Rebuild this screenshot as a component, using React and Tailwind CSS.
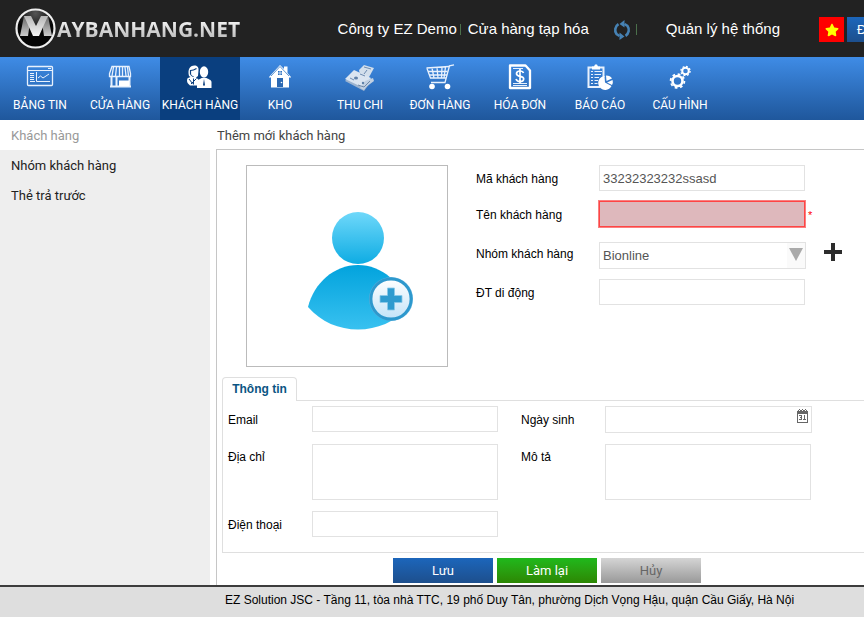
import { FaStar } from "react-icons/fa";

const svg = { fill: "none", stroke: "#e8f1fd", strokeWidth: 1.3 };

function DashboardIcon() {
  return (
    <svg width="28" height="24" viewBox="0 0 28 24" {...svg}>
      <rect x="1.5" y="1.5" width="25" height="19" rx="1" />
      <path d="M2 5.5h24M22 3.5h3M4 8.5h4M4 10.5h4M4 12.5h4M4 14.5h4M4 16.500h5M10.500 7v9.500H24M12 13l2.500-2 2.500 2 6-4" strokeWidth="1" />
    </svg>
  );
}

function StoreIcon() {
  return (
    <svg width="28" height="24" viewBox="0 0 28 24" {...svg}>
      <path d="M6 1.500h17l1.500 7v3h-21v-3z" />
      <path d="M7.500 2L6 11M10.500 2l-1 9M13.500 2v9M16.500 2v9M19 2l1 9M21.500 2l1 9" />
      <path d="M5.500 11v10.500M10.500 12v9M23.500 11v10.500M4 21.500h21" strokeWidth="2" />
      <path d="M13 15.500h10V21H13z" fill="#fff" stroke="none" />
    </svg>
  );
}

function CustomersIcon() {
  return (
    <svg width="28" height="24" viewBox="0 0 28 24" fill="#fff">
      <path d="M3 11C1.500 5 3.500 .5 8.500 .5c2.500 0 4.500 1.500 4 5L12 11l-2 1.500 2.500 2-1.500 6H4l-2-2c-1.500-2-1-5 0-5.500l2.500-1z" />
      <path d="M4.500 9V5.500C7 5.500 9 4.500 10.500 3.500" fill="none" stroke="#0a3f7f" strokeWidth="1.200" />
      <path d="M4.500 9c.5 1.500 1.500 2.500 3 2.500M3 14l3.500 4.500M10.500 13.500L5 19M7.500 13.500v6" fill="none" stroke="#0a3f7f" strokeWidth="1" />
      <ellipse cx="18" cy="7" rx="4.200" ry="5.700" />
      <path d="M11 23v-6c0-2 3-3 4.500-4h5c2 1 5 2 5 4v6z" />
      <path d="M18 14l-1 6 1 1 1-1z" fill="#0a3f7f" />
    </svg>
  );
}

function HouseIcon() {
  return (
    <svg width="28" height="24" viewBox="0 0 28 24">
      <path d="M3 12L14 0l4 4V1.500h3.500V8L25 12l-1 1-1-1v10.500H5V12l-1 1z" fill="#fff" />
      <path d="M5 11l9-9.500 9 9.500" fill="none" stroke="#3478c7" strokeWidth=".8" />
      <rect x="12" y="6" width="4" height="4" fill="#2f72c1" />
      <path d="M12 8h4M14 6v4" stroke="#fff" strokeWidth=".7" />
      <rect x="11" y="13" width="6" height="9" fill="#2b69b3" />
      <circle cx="15.500" cy="17.500" r=".8" fill="#fff" />
    </svg>
  );
}

function MoneyIcon() {
  return (
    <svg width="30" height="27" viewBox="0 0 30 27">
      <path d="M14 6l5-5 10 3-6 11-7 1z" fill="#d3dfec" />
      <path d="M0 17l7-7 18 9-6 8z" fill="#9cb3cf" />
      <path d="M0 15l9-9 17 8-7 10z" fill="#dbe5f1" />
      <path d="M20 17l8-3 1 3-8 6-2 3-4-2z" fill="#c1d0e2" />
      <path d="M19 3l7 2M5 14l4 2M15 10l5 2M22 6l-3 4" stroke="#6d8bb0" strokeWidth="1" fill="none" />
      <ellipse cx="11" cy="14" rx="2" ry="1.500" fill="#5f80a8" />
      <circle cx="18" cy="19" r="1.200" fill="#5f80a8" />
      <path d="M13 21l6 2 6-6" stroke="#7089a8" fill="none" />
    </svg>
  );
}

function CartIcon() {
  return (
    <svg width="30" height="26" viewBox="0 0 30 26" {...svg}>
      <path d="M29 .8l-4.500 1L20 18.500H6M2 4.500L5.500 14h16" />
      <path d="M1.500 4L24 2.500M3 7.500h19.500M4 11h18M7 4l2 10M12 3.500l1 10.500M17 3l-.5 11M20.500 3L19 14" />
      <circle cx="7" cy="22.500" r="2.800" fill="#fff" stroke="none" />
      <circle cx="22.500" cy="22.500" r="2.800" fill="#fff" stroke="none" />
    </svg>
  );
}

function InvoiceIcon() {
  return (
    <svg width="28" height="26" viewBox="0 0 28 26" {...svg}>
      <path d="M4 1.500h15.500l4.500 5v17.500H4z" strokeWidth="2.300" stroke="#fff" strokeLinejoin="round" />
      <path d="M7 4.500h10M7 19.500h14M7 21.500h14" strokeWidth="1" />
      <path d="M17.500 9c-.5-1.500-2-2-3.500-2-2 0-3.500 1-3.500 2.700 0 3.500 7.200 1.800 7.200 5 0 1.800-1.500 2.800-3.700 2.800s-3.500-1-4-2.500M14 5v14" strokeWidth="1.700" stroke="#fff" />
    </svg>
  );
}

function ReportIcon() {
  return (
    <svg width="28" height="26" viewBox="0 0 28 26" {...svg}>
      <path d="M14 23H2.500V3.500h15V13" strokeWidth="2" />
      <path d="M6 2.500h2l1-2h2l1 2h2v3H6z" fill="#fff" stroke="none" />
      <path d="M5 7.500h2M5 10.500h2M5 13.500h2M5 16.500h2M5 19.500h2M8.500 7.500H16M8.500 10.500H15M8.500 13.500H13M8.500 16.500H12M8.500 19.500h3" strokeWidth="1.200" />
      <path d="M19 18.500l-.500-6.500a7 7 0 1 0 7 10z" fill="#fff" stroke="none" />
      <path d="M20.500 17l-.5-5.500c3 0 5 1 6 3z" fill="#fff" stroke="none" />
      <path d="M21 18.500l5.500-2.500c.5 2 .5 3.500-.5 5z" fill="#fff" stroke="none" />
    </svg>
  );
}

function GearsIcon() {
  return (
    <svg width="24" height="25" viewBox="0 0 24 25" fill="none" stroke="#fff">
      <circle cx="9.500" cy="16" r="5" strokeWidth="2.600" />
      <circle cx="9.500" cy="16" r="6.900" strokeWidth="1.800" strokeDasharray="2.700 2.720" />
      <circle cx="17.500" cy="6" r="3.300" strokeWidth="2" />
      <circle cx="17.500" cy="6" r="4.600" strokeWidth="1.300" strokeDasharray="1.850 1.760" />
    </svg>
  );
}

function SyncIcon() {
  return (
    <svg width="18" height="20" viewBox="0 0 18 20" fill="none" stroke="#4682b4" strokeWidth="2.600">
      <path d="M5.500 4.200A6.800 6.800 0 0 0 3.500 14l3 2" />
      <path d="M12.500 15.800A6.800 6.800 0 0 0 14.500 6l-3-2" />
      <path d="M11.500 0v7.500L6.500 4zM6.500 12.500V20l5-3.500z" fill="#4682b4" stroke="none" />
    </svg>
  );
}

function CalendarIcon() {
  return (
    <svg width="11" height="14" viewBox="0 0 11 14" fill="none" stroke="#666" shapeRendering="crispEdges">
      <path d="M.5 4.500h10v9H.5z" />
      <path d="M0 2.500h11M0 3.500h11M2 .5h1M5 .5h1M8 .5h1M1 1.500h1M3 1.500h2M6 1.500h2M9 1.500h1" />
      <path d="M2 6.500h3M3 8.500h2M2 10.500h3M4.500 6v5M7 6.500h1M7.500 6v5M6 10.500h3" />
    </svg>
  );
}

function AvatarArt() {
  return (
    <svg width="106" height="120" viewBox="0 0 106 120">
      <defs>
        <linearGradient id="head" x2="0" y2="1">
          <stop stopColor="#6fd8fa" />
          <stop offset="1" stopColor="#0eace3" />
        </linearGradient>
        <linearGradient id="torso" x2="0" y2="1">
          <stop stopColor="#02a3dd" />
          <stop offset="1" stopColor="#38c1f0" />
        </linearGradient>
        <linearGradient id="disc" x2="0" y2="1">
          <stop stopColor="#fff" />
          <stop offset="1" stopColor="#c3e3f8" />
        </linearGradient>
      </defs>
      <circle cx="51" cy="27" r="26" fill="url(#head)" />
      <path d="M1 96C7 72 27 54 51 54s44 18 50 42C88 111 70 118.500 51 118.500S14 111 1 96z" fill="url(#torso)" />
      <path d="M88 66h18v54H84z" fill="#fff" />
      <circle cx="84" cy="88" r="22" fill="#54aedb" />
      <circle cx="84" cy="88" r="20" fill="url(#disc)" stroke="#2d98cd" strokeWidth="2.800" />
      <path d="M80.500 77h7v7.500H95v7h-7.500V99h-7v-7.500H73v-7h7.500z" fill="#2f9bcf" stroke="#8cc9e8" strokeWidth=".8" />
    </svg>
  );
}

const menu = [
  ["BẢNG TIN", DashboardIcon],
  ["CỬA HÀNG", StoreIcon],
  ["KHÁCH HÀNG", CustomersIcon],
  ["KHO", HouseIcon],
  ["THU CHI", MoneyIcon],
  ["ĐƠN HÀNG", CartIcon],
  ["HÓA ĐƠN", InvoiceIcon],
  ["BÁO CÁO", ReportIcon],
  ["CẤU HÌNH", GearsIcon],
];

const field = "block border border-[#e2e2e2] bg-white px-[3px] text-[13px] text-[#555] outline-none";

function Logo() {
  return (
    <a href="#" className="flex shrink-0 items-center" aria-label="Maybanhang.net">
      <svg width="42" height="42" viewBox="0 0 42 42">
        <defs>
          <radialGradient id="ball" cy="0.1">
            <stop stopColor="#555" />
            <stop offset="1" stopColor="#050505" />
          </radialGradient>
          <linearGradient id="leg" x2="0" y2="1">
            <stop stopColor="#666" />
            <stop offset="1" stopColor="#ccc" />
          </linearGradient>
          <linearGradient id="fold" x2="0" y2="1">
            <stop stopColor="#b5b5b5" />
            <stop offset="1" stopColor="#f5f5f5" />
          </linearGradient>
        </defs>
        <circle cx="20.500" cy="20.500" r="19" fill="url(#ball)" stroke="#eee" strokeWidth="2.200" />
        <path d="M9 8h5l1 6-2 14H5zM33 8h-5l-1 6 2 14h8z" fill="url(#leg)" />
        <path d="M9 8h7l5 10 5-10h7l-9 20h-6z" fill="url(#fold)" />
      </svg>
      <span className="bg-linear-to-b from-white to-[#b5b5b5] bg-clip-text font-['Open_Sans',sans-serif] text-[21px] leading-6 font-bold text-transparent">
        AYBANHANG.NET
      </span>
    </a>
  );
}

export default function App() {
  return (
    <div className="flex min-h-screen flex-col overflow-x-hidden bg-white font-['Liberation_Sans',Arial,sans-serif] text-[12px] text-black">
      <header className="flex h-[57px] items-center overflow-hidden bg-[#222] pl-[15px] text-[15px] whitespace-nowrap text-white">
        <Logo />
        <div className="ml-auto flex shrink-0 items-center pt-0.5">
          <span>Công ty EZ Demo</span>
          <span className="mr-[7px] ml-[3px] h-[11px] w-px bg-[#4b704b]" />
          <span>Cửa hàng tạp hóa</span>
          <button type="button" aria-label="Đồng bộ" className="ml-6">
            <SyncIcon />
          </button>
          <span className="ml-[5px] h-[11px] w-px bg-[#4b704b]" />
          <a href="#" className="ml-[29px]">Quản lý hệ thống</a>
          <button type="button" aria-label="Tiếng Việt" className="ml-[39px] flex size-[25px] items-center justify-center bg-[#f00] text-[#ff0]">
            <FaStar size={14} />
          </button>
          <button type="button" className="ml-[3px] h-[25px] w-[17px] overflow-hidden bg-linear-to-b from-[#1c66bb] to-[#1d4f8d] pl-2.5 text-left text-[13px]">
            Đăng xuất
          </button>
        </div>
      </header>

      <nav className="flex h-[63px] bg-linear-to-b from-[#3f8ce6] to-[#1f579c] font-[Roboto,sans-serif] text-[12px] whitespace-nowrap text-white">
        {menu.map(([label, Icon]) => (
          <a
            key={label}
            href="#"
            className={`flex w-20 shrink-0 flex-col items-center ${label === "KHÁCH HÀNG" ? "bg-[#0a3f7f]" : ""}`}
          >
            <span className="flex h-10 items-center justify-center">
              <Icon />
            </span>
            <span className="leading-4">{label}</span>
          </a>
        ))}
      </nav>

      <div className="flex flex-1">
        <aside className="flex w-[210px] shrink-0 flex-col font-[Roboto,sans-serif] text-[13px]">
          <h2 className="h-[30px] pl-[11px] leading-8 text-[#999]">Khách hàng</h2>
          <ul className="flex-1 bg-[#eee] pt-px leading-[30px] text-[#222]">
            <li><a href="#" className="block pl-[11px]">Nhóm khách hàng</a></li>
            <li><a href="#" className="block pl-[11px]">Thẻ trả trước</a></li>
          </ul>
        </aside>

        <main className="ml-1.5 flex min-w-0 flex-1 flex-col">
          <h1 className="h-[29px] pl-px font-[Roboto,sans-serif] text-[13px] leading-8 text-[#444]">Thêm mới khách hàng</h1>
          <form className="flex-1 border-t border-l border-[#c6c6c6] pl-[5px]">
            <div className="flex pt-[15px] pl-6">
              <button type="button" aria-label="Chọn ảnh" className="flex h-[202px] w-[202px] shrink-0 items-center justify-center border border-[#bbb] pt-2.5 pl-[26px]">
                <AvatarArt />
              </button>
              <div className="ml-7 flex shrink-0 flex-col">
                <div className="flex h-[26px] items-start">
                  <label htmlFor="code" className="w-[123px] leading-7">Mã khách hàng</label>
                  <input id="code" defaultValue="33232323232ssasd" className={`${field} h-[26px] w-[206px]`} />
                </div>
                <div className="mt-2.5 flex h-[26px] items-start">
                  <label htmlFor="name" className="w-[123px] leading-7">Tên khách hàng</label>
                  <input id="name" required className="block h-[26px] w-[206px] border border-[#f44] bg-[#deb8bc] px-[3px] text-[13px] shadow-[0_0_0_1px_#f98080] outline-none" />
                  <span className="ml-[3px] text-[11px] leading-7 text-[#f00]">*</span>
                </div>
                <div className="mt-[15px] flex h-[27px] items-start">
                  <label htmlFor="group" className="w-[123px] leading-6">Nhóm khách hàng</label>
                  <div className="relative">
                    <select id="group" className={`${field} h-[27px] w-[207px] appearance-none`}>
                      <option>Bionline</option>
                    </select>
                    <span className="pointer-events-none absolute inset-y-px right-px flex w-[18px] justify-center bg-[#fafafa] pt-[5px]">
                      <svg width="14" height="13" viewBox="0 0 14 13">
                        <path d="M0 0h14L7 13z" fill="#aaa" />
                      </svg>
                    </span>
                  </div>
                  <button type="button" aria-label="Thêm nhóm" className="ml-[18px] pt-px text-[#2c2c2c]">
                    <svg width="18" height="18" viewBox="0 0 18 18" fill="currentColor">
                      <path d="M7 0h4v7h7v4h-7v7H7v-7H0V7h7z" />
                    </svg>
                  </button>
                </div>
                <div className="mt-2.5 flex h-[26px] items-start">
                  <label htmlFor="mobile" className="w-[123px] leading-7">ĐT di động</label>
                  <input id="mobile" type="tel" className={`${field} h-[26px] w-[206px]`} />
                </div>
              </div>
            </div>

            <div className="mt-2.5 flex">
              <button type="button" className="h-6 w-[75px] rounded-t border border-b-0 border-[#dfdfdf] pb-0.5 font-bold text-[#0b5583]">
                Thông tin
              </button>
              <span className="flex-1 border-b border-[#dfdfdf]" />
            </div>
            <div className="flex items-start border-b border-l border-[#dfdfdf] pt-[5px] pb-[15px] pl-[5px]">
              <div className="grid shrink-0 grid-cols-[84px_186px] grid-rows-[27px_56px_26px] items-start gap-y-[11px]">
                <label htmlFor="email" className="leading-7">Email</label>
                <input id="email" type="email" className={`${field} h-[26px] w-full`} />
                <label htmlFor="address" className="leading-[26px]">Địa chỉ</label>
                <textarea id="address" className={`${field} h-14 w-full resize-none`} />
                <label htmlFor="phone" className="leading-7">Điện thoại</label>
                <input id="phone" type="tel" className={`${field} h-[26px] w-full`} />
              </div>
              <div className="ml-[23px] grid shrink-0 grid-cols-[84px_207px] grid-rows-[27px_56px] items-start gap-y-[11px]">
                <label htmlFor="birthday" className="leading-7">Ngày sinh</label>
                <div className="relative">
                  <input id="birthday" className={`${field} h-[27px] w-full`} />
                  <button type="button" aria-label="Chọn ngày" className="absolute top-[3px] right-1">
                    <CalendarIcon />
                  </button>
                </div>
                <label htmlFor="note" className="leading-[26px]">Mô tả</label>
                <textarea id="note" className={`${field} h-14 w-[206px] resize-none`} />
              </div>
            </div>

            <div className="flex justify-center gap-1 pt-[5px] pb-0.5 pl-2 font-[Roboto,sans-serif] text-[13px]">
              <button type="submit" className="h-[25px] w-[100px] bg-linear-to-b from-[#1c66bb] to-[#1d4f8d] text-white">Lưu</button>
              <button type="reset" className="h-[25px] w-[100px] bg-linear-to-b from-[#1fb91c] to-[#2c8703] text-white">Làm lại</button>
              <button type="button" className="h-[25px] w-[100px] bg-linear-to-b from-[#d5d5d5] to-[#999] text-[#666]">Hủy</button>
            </div>
          </form>
        </main>
      </div>

      <footer className="h-8 border-t-2 border-[#3c3c3c] bg-[#dedede] pl-[225px] text-[12px] leading-[26px] whitespace-nowrap">
        EZ Solution JSC - Tầng 11, tòa nhà TTC, 19 phố Duy Tân, phường Dịch Vọng Hậu, quận Cầu Giấy, Hà Nội
      </footer>
    </div>
  );
}
